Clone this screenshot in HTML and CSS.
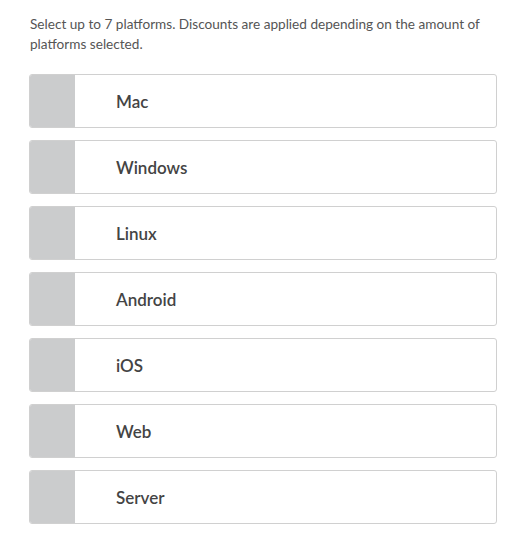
FILE: index.html
```html
<!DOCTYPE html>
<html>
<head>
<meta charset="utf-8">
<link rel="stylesheet" href="styles.css">
</head>
<body>
<div class="page">
  <p class="intro">Select up to 7 platforms. Discounts are applied depending on the amount of platforms selected.</p>
  <ul class="platforms">
    <li class="platform"><span class="check"></span><span class="name">Mac</span></li>
    <li class="platform"><span class="check"></span><span class="name">Windows</span></li>
    <li class="platform"><span class="check"></span><span class="name">Linux</span></li>
    <li class="platform"><span class="check"></span><span class="name">Android</span></li>
    <li class="platform"><span class="check"></span><span class="name">iOS</span></li>
    <li class="platform"><span class="check"></span><span class="name">Web</span></li>
    <li class="platform"><span class="check"></span><span class="name">Server</span></li>
  </ul>
</div>
</body>
</html>
```
FILE: styles.css
```css
html, body {
  margin: 0;
  padding: 0;
  background: #fff;
}
.page {
  width: 468px;
  padding: 14px 0 0 29px;
  font-family: Lato, "Open Sans", sans-serif;
}
.intro {
  margin: 0 0 20px 1px;
  font-size: 13.6px;
  line-height: 20px;
  color: #555;
}
.platforms {
  list-style: none;
  margin: 0;
  padding: 0;
  display: flex;
  flex-direction: column;
  gap: 12px;
}
.platform {
  display: flex;
  align-items: stretch;
  height: 52px;
  border: 1px solid #d0d0d0;
  border-radius: 3px;
  overflow: hidden;
}
.check {
  width: 46px;
  background: #cbcccd;
  margin: -1px 0 -1px -1px;
}
.name {
  display: flex;
  align-items: center;
  padding-left: 41px;
  font-size: 17px;
  font-weight: 600;
  color: #444;
}
```
